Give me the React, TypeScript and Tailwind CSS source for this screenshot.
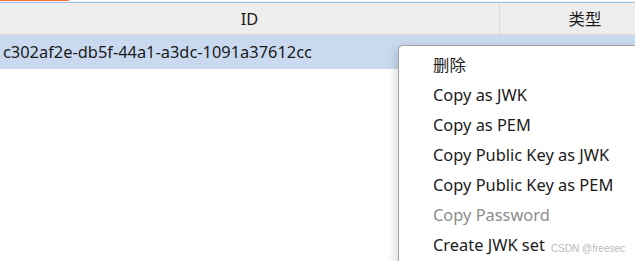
const menuItems = [
  { label: '删除' },
  { label: 'Copy as JWK' },
  { label: 'Copy as PEM' },
  { label: 'Copy Public Key as JWK' },
  { label: 'Copy Public Key as PEM' },
  { label: 'Copy Password', disabled: true },
  { label: 'Create JWK set' },
]

export default function App() {
  return (
    <div className="relative w-[635px] h-[261px] overflow-hidden bg-white text-[16.4px] text-[#1b1b1b] font-['Noto_Sans','Noto_Sans_CJK_SC',sans-serif]">
      {/* top strip */}
      <div className="h-px w-[69px] bg-[#f4713f]" />
      <div className="h-px bg-[#f2f2f2]" />
      <div className="h-px bg-[#9ec3e8]" />

      {/* table header */}
      <div className="flex h-[32px] bg-[#ededed] border-b border-[#d6d6d6]">
        <div className="w-[500px] shrink-0 flex items-center justify-center border-r border-[#d9d9d9] pt-[1px]">ID</div>
        <div className="w-[170px] shrink-0 flex items-center justify-center pt-[1px]">类型</div>
      </div>

      {/* selected row */}
      <div className="flex items-center h-[34px] bg-[#c9daf0] pl-[3px]">
        c302af2e-db5f-44a1-a3dc-1091a37612cc
      </div>

      {/* context menu */}
      <div className="absolute left-[398px] top-[45px] w-[260px] h-[240px] bg-white border border-[#a3a3a3] rounded-tl-[5px] pt-[4px] shadow-[-3px_3px_10px_rgba(0,0,0,0.14)]">
        {menuItems.map((item) => (
          <div
            key={item.label}
            className={
              'h-[30px] flex items-center pl-[34px] whitespace-nowrap ' +
              (item.disabled ? 'text-[#8c8c8c]' : 'text-[#1b1b1b]')
            }
          >
            {item.label}
          </div>
        ))}
      </div>

      {/* watermark */}
      <div className="absolute left-[551px] top-[243px] text-[10px] leading-[12px] text-[#bababa] font-['Liberation_Sans',sans-serif]">
        CSDN @freesec
      </div>
    </div>
  )
}
